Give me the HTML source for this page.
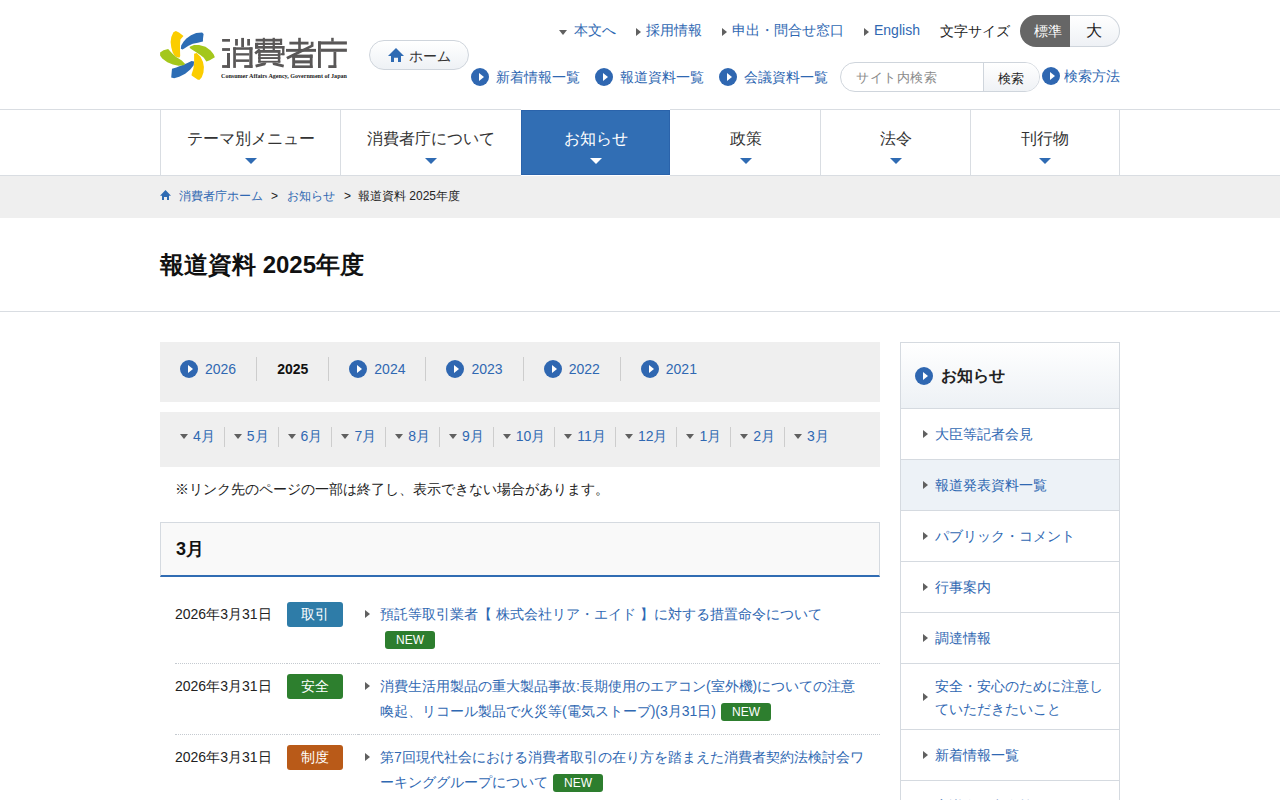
<!DOCTYPE html>
<html lang="ja"><head><meta charset="utf-8"><title>報道資料 2025年度 | 消費者庁</title>
<style>
*{box-sizing:border-box;margin:0;padding:0}
html,body{width:1280px;height:800px;overflow:hidden;background:#fff}
body{font-family:"Liberation Sans",sans-serif;color:#222;position:relative}
.a{position:absolute;white-space:nowrap}
.lk{color:#2f68b2}
.tri-d{position:absolute;width:0;height:0;border-left:4px solid transparent;border-right:4px solid transparent;border-top:5px solid #606060}
.tri-r{position:absolute;width:0;height:0;border-top:4px solid transparent;border-bottom:4px solid transparent;border-left:5px solid #606060}
.circ{position:absolute;width:18px;height:18px;border-radius:50%;background:#2f67b1}
.circ:after{content:"";position:absolute;left:8px;top:5px;border-top:4px solid transparent;border-bottom:4px solid transparent;border-left:5px solid #fff}
.hline{position:absolute;left:0;width:1280px;height:1px;background:#d9dde2}
.vline{position:absolute;width:1px;background:#d9dde2}
.t14{font-size:14px;line-height:20px}
.navt{font-size:16px;line-height:20px;color:#333;text-align:center}
.navarr{position:absolute;width:0;height:0;border-left:6px solid transparent;border-right:6px solid transparent;border-top:6px solid #2f6bb3}
</style></head><body>

<!-- HEADER -->
<svg class="a" style="left:158px;top:28px" width="60" height="56" viewBox="0 0 60 56"><polygon fill="#fbcd00" points="15.40,4.20 17.85,3.00 21.00,4.50 25.50,7.90 22.40,11.50 22.00,16.80 22.00,22.00 22.20,28.00 21.40,29.80 18.50,29.00 16.80,28.00 14.70,24.50 13.30,19.60 12.60,14.00 13.30,9.10"/><polygon fill="#2c6db5" points="22.85,20.80 23.20,17.50 25.50,13.80 28.40,10.60 33.00,7.20 38.15,4.90 44.10,4.46 45.60,5.95 44.95,11.05 44.95,13.60 39.85,14.66 34.75,15.70 30.50,17.85 26.25,20.40 24.55,21.46"/><polygon fill="#a4c71b" points="31.80,18.70 36.00,17.00 41.10,17.00 47.50,18.70 52.60,22.50 55.60,26.35 56.85,29.30 51.75,32.30 48.35,33.60 45.80,29.75 42.00,26.80 38.15,24.20 33.50,21.25 31.80,20.00"/><polygon fill="#fbcd00" points="36.10,25.80 38.70,25.00 42.50,28.80 45.00,33.90 45.90,39.00 45.45,44.50 43.75,49.20 41.60,51.70 39.90,51.70 33.60,47.50 33.60,46.20 35.30,41.10 36.10,35.60 36.10,30.50"/><polygon fill="#2c6db5" points="33.55,33.05 36.10,33.50 35.70,37.30 32.30,41.50 27.20,45.80 21.25,48.75 16.15,50.25 13.20,49.60 13.60,44.90 14.00,40.70 18.30,39.40 23.80,37.30 28.90,35.20"/><polygon fill="#a4c71b" points="2.10,24.50 5.50,22.20 10.15,21.00 14.00,25.20 17.85,28.80 23.80,32.60 27.20,36.00 25.50,37.30 20.40,37.70 14.90,36.40 9.35,34.30 4.25,30.50 2.10,27.50"/></svg>
<svg class="a" style="left:0;top:0" width="360" height="84" viewBox="0 0 360 84"><g fill="#595757"><rect x="222.1" y="39" width="7.9" height="2.7"/><rect x="222.1" y="48.1" width="7.9" height="2.8"/><rect x="227" y="53" width="3" height="14.9"/><rect x="222.1" y="65.1" width="7.9" height="2.8"/><rect x="235.1" y="39" width="2.8" height="6.6"/><rect x="241.2" y="37.9" width="2.8" height="9.4"/><rect x="247.2" y="39" width="2.8" height="6.6"/><rect x="233.2" y="47.3" width="2.7" height="20.6"/><rect x="249.3" y="47.3" width="3.2" height="20.6"/><rect x="233.2" y="47.3" width="19.3" height="2.5"/><rect x="235.9" y="53.2" width="13.4" height="2.3"/><rect x="235.9" y="59.4" width="13.4" height="2.5"/><rect x="244.2" y="65.1" width="8.3" height="2.8"/><rect x="255.6" y="38.8" width="26.5" height="2.7"/><rect x="262.8" y="37.8" width="2.1" height="14"/><rect x="272.6" y="37.8" width="2.3" height="14"/><rect x="256.4" y="42.8" width="25.7" height="2.1"/><rect x="280" y="38.8" width="2.1" height="6.1"/><rect x="255" y="46" width="29.4" height="2.6"/><rect x="255" y="42.8" width="3.2" height="5.8"/><rect x="282.1" y="46" width="2.3" height="9.2"/><rect x="280.3" y="53.2" width="4.1" height="2"/><rect x="258.2" y="50" width="22.1" height="2.8"/><rect x="258.2" y="50" width="2.5" height="12.6"/><rect x="277.8" y="50" width="2.5" height="12.6"/><rect x="258.2" y="54.1" width="22.1" height="1.8"/><rect x="258.2" y="57.1" width="22.1" height="1.9"/><rect x="258.2" y="60.8" width="22.1" height="1.8"/><rect x="298.2" y="37.8" width="2.6" height="12.7"/><rect x="289.4" y="41.7" width="19.1" height="2.8"/><rect x="286" y="48.9" width="30" height="2.9"/><rect x="292.2" y="54.6" width="2.9" height="13.4"/><rect x="309.8" y="54.6" width="2.8" height="13.4"/><rect x="292.2" y="54.6" width="20.4" height="3.3"/><rect x="295" y="60.3" width="15" height="3.1"/><rect x="292.2" y="65.4" width="20.4" height="2.6"/><rect x="331.2" y="37.8" width="2.5" height="3.9"/><rect x="318" y="41.4" width="28.9" height="3.1"/><rect x="318" y="41.4" width="2.9" height="26.6"/><rect x="320.9" y="48.7" width="26" height="3.1"/><rect x="333.5" y="51.8" width="2.8" height="16.2"/><rect x="328.3" y="65.2" width="8" height="2.8"/><polygon points="258.9,48.6 261,50.5 256,54.6 254.3,52.5"/><polygon points="263.5,62.6 266.6,62.6 265.2,65.3 256,67.4 255.2,64.8"/><polygon points="272.4,62.6 275.4,62.6 284,64.8 283.4,67.4 273,65"/><polygon points="310.8,41.7 313.5,41.7 313.5,46.6 287.6,59.6 286.2,57.1 310.8,44.9"/></g></svg>
<div class="a" style="left:221px;top:72px;font-family:'Liberation Serif',serif;font-size:6.6px;line-height:8px;font-weight:bold;color:#1a1a1a;transform-origin:0 0;transform:scaleX(0.92)">Consumer Affairs Agency, Government of Japan</div>

<!-- home button -->
<div class="a" style="left:369px;top:40px;width:100px;height:30px;border:1px solid #cfd5dc;border-radius:15px;background:linear-gradient(#fff,#eef1f5)"></div>
<svg class="a" style="left:388px;top:48px" width="16" height="14" viewBox="0 0 16 14"><path fill="#2f6bb3" d="M8,0 L16,7.9 L13,7.9 L13,14 L10,14 L10,9.8 L6,9.8 L6,14 L3,14 L3,7.9 L0,7.9Z"/></svg>
<div class="a" style="left:409px;top:46px;font-size:14px;line-height:20px;color:#333">ホーム</div>

<!-- top links -->
<div class="tri-d" style="left:559px;top:30px"></div>
<div class="a t14 lk" style="left:574px;top:20px">本文へ</div>
<div class="tri-r" style="left:636px;top:28px"></div>
<div class="a t14 lk" style="left:646px;top:20px">採用情報</div>
<div class="tri-r" style="left:722px;top:28px"></div>
<div class="a t14 lk" style="left:732px;top:20px">申出・問合せ窓口</div>
<div class="tri-r" style="left:864px;top:28px"></div>
<div class="a t14 lk" style="left:874px;top:20px">English</div>
<div class="a t14" style="left:940px;top:21px;color:#222">文字サイズ</div>
<div class="a" style="left:1069px;top:15px;width:51px;height:32px;border:1px solid #cfd5dc;border-left:0;border-radius:0 16px 16px 0;background:linear-gradient(#fff,#eef1f5)"></div>
<div class="a" style="left:1020px;top:15px;width:50px;height:32px;border-radius:16px 0 0 16px;background:#666"></div>
<div class="a t14" style="left:1034px;top:21px;color:#fff">標準</div>
<div class="a" style="left:1086px;top:21px;font-size:16px;line-height:20px;color:#222">大</div>

<!-- second row -->
<div class="circ" style="left:471px;top:68px"></div>
<div class="a t14 lk" style="left:496px;top:67px">新着情報一覧</div>
<div class="circ" style="left:595px;top:68px"></div>
<div class="a t14 lk" style="left:620px;top:67px">報道資料一覧</div>
<div class="circ" style="left:719px;top:68px"></div>
<div class="a t14 lk" style="left:744px;top:67px">会議資料一覧</div>
<div class="a" style="left:840px;top:62px;width:200px;height:30px;border:1px solid #cfd5dc;border-radius:15px;background:#fff;overflow:hidden">
  <div class="a" style="left:142px;top:0;width:58px;height:30px;border-left:1px solid #cfd5dc;background:linear-gradient(#fff,#eef1f5)"></div>
</div>
<div class="a" style="left:856px;top:68px;font-size:13.333px;line-height:20px;color:#8a8a8a;letter-spacing:0.6px">サイト内検索</div>
<div class="a" style="left:998px;top:69px;font-size:13.333px;line-height:20px;color:#222;letter-spacing:0.4px">検索</div>
<div class="circ" style="left:1042px;top:67px"></div>
<div class="a t14 lk" style="left:1064px;top:66px">検索方法</div>

<!-- NAV -->
<div class="hline" style="top:109px"></div>
<div class="a" style="left:521px;top:109px;width:149px;height:1px;background:#fff"></div>
<div class="hline" style="top:175px"></div>
<div class="a" style="left:521px;top:175px;width:149px;height:1px;background:#fff"></div>
<div class="vline" style="left:160px;top:109px;height:67px"></div>
<div class="vline" style="left:340px;top:109px;height:67px"></div>
<div class="vline" style="left:820px;top:109px;height:67px"></div>
<div class="vline" style="left:970px;top:109px;height:67px"></div>
<div class="vline" style="left:1119px;top:109px;height:67px"></div>
<div class="a" style="left:521px;top:110px;width:149px;height:65px;background:#316eb4;border:1px solid #2a63ab"></div>

<div class="a navt" style="left:161px;top:129px;width:179px">テーマ別メニュー</div>
<div class="navarr" style="left:245px;top:158px"></div>
<div class="a navt" style="left:341px;top:129px;width:179px">消費者庁について</div>
<div class="navarr" style="left:425px;top:158px"></div>
<div class="a navt" style="left:521px;top:129px;width:149px;color:#fff">お知らせ</div>
<div class="navarr" style="left:590px;top:158px;border-top-color:#fff"></div>
<div class="a navt" style="left:671px;top:129px;width:149px">政策</div>
<div class="navarr" style="left:740px;top:158px"></div>
<div class="a navt" style="left:821px;top:129px;width:149px">法令</div>
<div class="navarr" style="left:890px;top:158px"></div>
<div class="a navt" style="left:971px;top:129px;width:148px">刊行物</div>
<div class="navarr" style="left:1039px;top:158px"></div>

<!-- BREADCRUMB -->
<div class="a" style="left:0;top:176px;width:1280px;height:42px;background:#efefef"></div>
<svg class="a" style="left:160px;top:190px" width="11" height="10" viewBox="0 0 11 10"><path fill="#2f6bb3" d="M5.5,0 L11,5.7 L9,5.7 L9,10 L7,10 L7,7 L4,7 L4,10 L2,10 L2,5.7 L0,5.7Z"/></svg>
<div class="a lk" style="left:179px;top:186px;font-size:12px;line-height:20px">消費者庁ホーム</div>
<div class="a" style="left:271px;top:186px;font-size:12px;line-height:20px;color:#222">&gt;</div>
<div class="a lk" style="left:287px;top:186px;font-size:12px;line-height:20px">お知らせ</div>
<div class="a" style="left:344px;top:186px;font-size:12px;line-height:20px;color:#222">&gt;</div>
<div class="a" style="left:358px;top:186px;font-size:12px;line-height:20px;color:#222">報道資料 2025年度</div>

<!-- TITLE -->
<div class="a" style="left:160px;top:250px;font-size:24px;line-height:30px;font-weight:bold;color:#111">報道資料 2025年度</div>
<div class="hline" style="top:311px"></div>


<!-- MAIN -->
<style>
.yr{position:absolute;left:160px;top:342px;width:720px;height:60px;background:#efefef;display:flex;align-items:center;padding-bottom:6px}
.yr .it{display:flex;align-items:center;padding:0 20px;height:24px;font-size:14px;line-height:20px;border-left:1px solid #cdcdcd;position:relative}
.yr .it:first-child{border-left:0}
.yr .it .circ{position:relative;display:inline-block;margin-right:7px}
.mo{position:absolute;left:160px;top:412px;width:720px;height:55px;background:#efefef;display:flex;align-items:center;padding-left:11px;padding-bottom:5px}
.mo .it{display:flex;align-items:center;padding:0 9px;height:20px;font-size:14px;line-height:17px;border-left:1px solid #cdcdcd}
.mo .it:first-child{border-left:0}
.mo .it span{position:relative;top:-1px}
.mo .it i{display:inline-block;width:0;height:0;border-left:4px solid transparent;border-right:4px solid transparent;border-top:5px solid #606060;margin-right:5px;position:relative;top:-1px}
.lst{position:absolute;left:160px;top:592px;width:720px}
.row{display:flex;margin-left:15px;font-size:14px;line-height:25px}
.row>div{border-bottom:1px dotted #c5cad0;padding-top:10px;padding-bottom:10px}
.row .dt{width:110px;flex:none;margin-right:1px;color:#222}
.row .lc{width:72px;flex:none;padding-left:1px}
.row .lb{width:56px;height:25px;border-radius:3px;color:#fff;text-align:center;line-height:25px}
.row .tt{width:522px;flex:none;position:relative;padding-left:22px;padding-right:14px;color:#2f68b2}
.row .tt:before{content:"";position:absolute;left:7px;top:18px;border-top:4px solid transparent;border-bottom:4px solid transparent;border-left:5px solid #606060}
.new{display:inline-block;width:50px;height:18px;line-height:18px;background:#2d7e2e;color:#fff;font-size:12px;text-align:center;border-radius:3px;margin-left:5px;vertical-align:0px}
.side{position:absolute;left:900px;top:342px;width:220px;border:1px solid #d5dae0;border-bottom:0}
.side .hd{height:66px;border-bottom:1px solid #d5dae0;background:linear-gradient(#fff,#edf1f5);position:relative}
.side .hd .circ{left:14px;top:24px}
.side .hd span{position:absolute;left:40px;top:23px;font-size:16px;line-height:20px;font-weight:bold;color:#222}
.side .si{min-height:51px;border-bottom:1px solid #d5dae0;display:flex;align-items:center;padding:8px 10px 9px 34px;position:relative;font-size:14px;line-height:24px;color:#2f68b2}
.side .si:before{content:"";position:absolute;left:22px;top:50%;margin-top:-4px;border-top:4px solid transparent;border-bottom:4px solid transparent;border-left:5px solid #606060}
.side .si.on{background:#edf2f7}
</style>
<div class="yr">
 <div class="it lk"><span class="circ"></span>2026</div>
 <div class="it" style="font-weight:bold;color:#111">2025</div>
 <div class="it lk"><span class="circ"></span>2024</div>
 <div class="it lk"><span class="circ"></span>2023</div>
 <div class="it lk"><span class="circ"></span>2022</div>
 <div class="it lk"><span class="circ"></span>2021</div>
</div>
<div class="mo">
 <div class="it lk"><i></i><span>4月</span></div>
 <div class="it lk"><i></i><span>5月</span></div>
 <div class="it lk"><i></i><span>6月</span></div>
 <div class="it lk"><i></i><span>7月</span></div>
 <div class="it lk"><i></i><span>8月</span></div>
 <div class="it lk"><i></i><span>9月</span></div>
 <div class="it lk"><i></i><span>10月</span></div>
 <div class="it lk"><i></i><span>11月</span></div>
 <div class="it lk"><i></i><span>12月</span></div>
 <div class="it lk"><i></i><span>1月</span></div>
 <div class="it lk"><i></i><span>2月</span></div>
 <div class="it lk"><i></i><span>3月</span></div>
</div>
<div class="a t14" style="left:175px;top:479px;color:#222">※リンク先のページの一部は終了し、表示できない場合があります。</div>
<div class="a" style="left:160px;top:522px;width:720px;height:55px;border:1px solid #d5dae0;border-bottom:2px solid #306cb3;background:#fff">
  <div class="a" style="left:0;top:0;width:718px;height:52px;background:#f9f9f9"></div>
</div>
<div class="a" style="left:176px;top:538px;font-size:18px;line-height:22px;font-weight:bold;color:#111">3月</div>
<div class="lst">
 <div class="row"><div class="dt">2026年3月31日</div><div class="lc"><div class="lb" style="background:#2e7ca8">取引</div></div><div class="tt" style="padding-bottom:11px">預託等取引業者【 株式会社リア・エイド 】に対する措置命令について<span class="new">NEW</span></div></div>
 <div class="row"><div class="dt">2026年3月31日</div><div class="lc"><div class="lb" style="background:#2d7f2e">安全</div></div><div class="tt">消費生活用製品の重大製品事故:長期使用のエアコン(室外機)についての注意喚起、リコール製品で火災等(電気ストーブ)(3月31日)<span class="new">NEW</span></div></div>
 <div class="row"><div class="dt">2026年3月31日</div><div class="lc"><div class="lb" style="background:#b95a18">制度</div></div><div class="tt">第7回現代社会における消費者取引の在り方を踏まえた消費者契約法検討会ワーキンググループについて<span class="new">NEW</span></div></div>
</div>
<div class="side">
 <div class="hd"><span class="circ"></span><span>お知らせ</span></div>
 <div class="si">大臣等記者会見</div>
 <div class="si on">報道発表資料一覧</div>
 <div class="si">パブリック・コメント</div>
 <div class="si">行事案内</div>
 <div class="si">調達情報</div>
 <div class="si" style="padding-top:11px;padding-bottom:8px;line-height:23px">安全・安心のために注意していただきたいこと</div>
 <div class="si">新着情報一覧</div>
 <div class="si">審議会研究会等</div>
</div>

</body></html>
